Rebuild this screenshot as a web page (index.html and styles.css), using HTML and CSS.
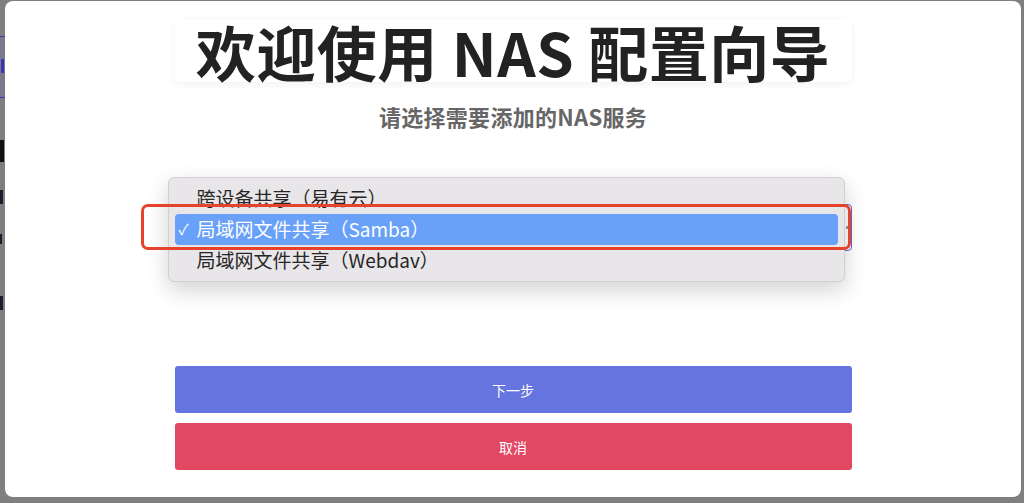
FILE: index.html
```html
<!DOCTYPE html>
<html lang="zh-CN">
<head>
<meta charset="utf-8">
<title>NAS 配置向导</title>
<link rel="stylesheet" href="styles.css">
</head>
<body>
<div class="behind">
  <div class="behind-link"><span class="frag f0"></span></div>
  <span class="frag f1"></span>
  <span class="frag f2"></span>
  <span class="frag f3"></span>
  <span class="frag f4"></span>
</div>
<div class="modal">
  <div class="title-box">欢迎使用 NAS 配置向导</div>
  <div class="subtitle">请选择需要添加的NAS服务</div>
  <div class="select-wrap">
    <div class="select"><span class="chev"></span></div>
    <div class="popup">
      <div class="opt">跨设备共享（易有云）</div>
      <div class="opt sel"><span class="check">✓</span>局域网文件共享（Samba）</div>
      <div class="opt">局域网文件共享（Webdav）</div>
    </div>
    <div class="mark"></div>
  </div>
  <div class="btn next">下一步</div>
  <div class="btn cancel">取消</div>
</div>
</body>
</html>
```
FILE: styles.css
```css
html, body {
  margin: 0;
  padding: 0;
}
body {
  width: 1024px;
  height: 503px;
  overflow: hidden;
  background: #7f7f7f;
  font-family: "Noto Sans CJK SC", "Noto Sans", sans-serif;
  position: relative;
}
.behind {
  position: absolute;
  left: 0;
  top: 0;
  width: 40px;
  height: 503px;
  z-index: 0;
}
.behind-link {
  position: absolute;
  left: -14px;
  top: 36px;
  width: 18px;
  height: 60px;
  border: 1px solid #3a34b0;
  background: #7a7a8a;
}
.frag {
  position: absolute;
  display: block;
  background: #1c1c2c;
}
.f0 { left: 14px; top: 22px; width: 3px; height: 14px; background: #3a34b0; }
.f1 { left: 0; top: 140px; width: 4px; height: 22px; background: #111; }
.f2 { left: 0; top: 190px; width: 3px; height: 14px; }
.f3 { left: 0; top: 234px; width: 2px; height: 10px; }
.f4 { left: 0; top: 296px; width: 3px; height: 14px; }
.modal {
  position: relative;
  z-index: 1;
  margin: 1px 3px 0 5px;
  height: 496px;
  background: #fff;
  border-radius: 8px;
  display: flex;
  flex-direction: column;
  align-items: center;
  box-sizing: border-box;
}
.title-box {
  margin-top: 19px;
  width: 677px;
  height: 62px;
  border-radius: 6px;
  box-shadow: 0 2px 8px rgba(0, 0, 0, 0.06);
  display: flex;
  align-items: center;
  justify-content: center;
  font-size: 60px;
  font-weight: 700;
  color: #222;
  line-height: 62px;
  letter-spacing: 0.5px;
}
.subtitle {
  margin-top: 19px;
  height: 30px;
  line-height: 30px;
  font-size: 22px;
  font-weight: 600;
  color: #666;
  letter-spacing: 0.3px;
}
.select-wrap {
  margin-top: 73px;
  width: 677px;
  height: 47px;
  position: relative;
}
.select {
  height: 47px;
  border: 1px solid #5b67e0;
  border-radius: 4px;
  box-sizing: border-box;
  position: relative;
}
.chev {
  position: absolute;
  right: 2px;
  top: 21px;
  width: 3px;
  height: 3px;
  background: #999;
}
.popup {
  position: absolute;
  left: -7px;
  top: -27px;
  width: 677px;
  height: 105px;
  box-sizing: border-box;
  padding: 5px 6px;
  background: #e9e6e9;
  border: 1px solid #d2cfd2;
  border-radius: 6px;
  box-shadow: 0 8px 22px rgba(0, 0, 0, 0.18);
  display: flex;
  flex-direction: column;
}
.opt {
  height: 31px;
  line-height: 30px;
  font-size: 19px;
  color: #262626;
  padding-left: 22px;
  position: relative;
  border-radius: 4px;
}
.opt.sel {
  background: #69a0f8;
  color: #fff;
}
.check {
  position: absolute;
  left: 4px;
  top: 0;
  font-size: 15px;
}
.mark {
  position: absolute;
  left: -34px;
  top: 0;
  width: 710px;
  height: 46px;
  box-sizing: border-box;
  border: 3px solid #e5432c;
  border-radius: 7px;
}
.btn {
  width: 677px;
  height: 47px;
  border-radius: 3px;
  color: #fff;
  font-size: 14px;
  display: flex;
  align-items: center;
  justify-content: center;
}
.next {
  margin-top: 115px;
  background: #6574de;
}
.cancel {
  margin-top: 10px;
  background: #e14963;
}
```
